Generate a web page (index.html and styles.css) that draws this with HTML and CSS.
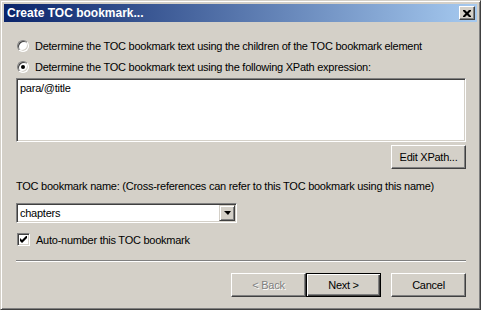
FILE: index.html
```html
<!DOCTYPE html>
<html lang="en">
<head>
    <meta charset="UTF-8">
    <title>Create TOC bookmark...</title>
    <link rel="stylesheet" href="styles.css">
</head>
<body>
    <div class="window">
        <div class="titlebar">
            <span class="title">Create TOC bookmark...</span>
            <span class="close">
                <svg width="8" height="7" viewBox="0 0 8 7">
                    <path d="M0 0h2l2 2 2-2h2v1l-2.5 2.5 2.5 2.5v1h-2l-2-2-2 2h-2v-1l2.5-2.5-2.5-2.5z" fill="#000"/>
                </svg>
            </span>
        </div>

        <div class="content">
            <label class="option">
                <span class="radio"></span>
                Determine the TOC bookmark text using the children of the TOC bookmark element
            </label>
            <label class="option">
                <span class="radio checked"></span>
                Determine the TOC bookmark text using the following XPath expression:
            </label>

            <div class="textbox">para/@title</div>

            <div class="row-right">
                <button class="btn">Edit XPath...</button>
            </div>

            <div class="name-label">TOC bookmark name: (Cross-references can refer to this TOC bookmark using this name)</div>

            <div class="combo">
                <span class="combo-text">chapters</span>
                <span class="combo-arrow"><span class="triangle"></span></span>
            </div>

            <label class="check-row">
                <span class="checkbox">
                    <svg width="7" height="7" viewBox="0 0 7 7">
                        <path d="M0 2v3l2 2 5-5v-3l-5 5z" fill="#000"/>
                    </svg>
                </span>
                Auto-number this TOC bookmark
            </label>

            <div class="separator"></div>

            <div class="buttons">
                <button class="btn disabled">&lt; Back</button>
                <button class="btn default">Next &gt;</button>
                <button class="btn cancel">Cancel</button>
            </div>
        </div>
    </div>
</body>
</html>
```

FILE: styles.css
```css
* {
    box-sizing: border-box;
}

body {
    margin: 0;
    background: #d4d0c8;
    font-family: "Liberation Sans", Arial, sans-serif;
    font-size: 11px;
    letter-spacing: -0.25px;
    color: #000;
}

.window {
    width: 481px;
    height: 310px;
    background: #d4d0c8;
    border-top: 1px solid #d4d0c8;
    border-left: 1px solid #d4d0c8;
    border-right: 1px solid #404040;
    border-bottom: 1px solid #404040;
    box-shadow: inset 1px 1px 0 #fff, inset -1px -1px 0 #808080;
    padding: 3px;
}

.titlebar {
    height: 18px;
    background: linear-gradient(to right, #0a246a, #a6caf0);
    display: flex;
    align-items: center;
    justify-content: space-between;
    padding: 0 2px 0 3px;
}

.title {
    color: #fff;
    font-weight: bold;
    font-size: 12px;
    letter-spacing: 0;
}

.close {
    width: 16px;
    height: 14px;
    background: #d4d0c8;
    border-top: 1px solid #fff;
    border-left: 1px solid #fff;
    border-right: 1px solid #404040;
    border-bottom: 1px solid #404040;
    box-shadow: inset -1px -1px 0 #808080;
    display: flex;
    align-items: center;
    justify-content: center;
    padding-right: 1px;
}

.content {
    padding: 13px 11px 0 12px;
}

.option {
    display: flex;
    align-items: center;
    height: 21px;
    gap: 6px;
    padding-left: 1px;
}

.radio {
    width: 12px;
    height: 12px;
    border-radius: 50%;
    background: #fff;
    border: 1px solid;
    border-color: #808080 #fff #fff #808080;
    box-shadow: inset 1px 1px 0 #404040, inset -1px -1px 0 #d4d0c8;
    position: relative;
    flex: none;
}

.radio.checked::after {
    content: "";
    position: absolute;
    left: 3px;
    top: 3px;
    width: 4px;
    height: 4px;
    border-radius: 50%;
    background: #000;
}

.textbox {
    margin-top: 1px;
    height: 64px;
    background: #fff;
    border: 1px solid;
    border-color: #808080 #fff #fff #808080;
    box-shadow: inset 1px 1px 0 #404040, inset -1px -1px 0 #d4d0c8;
    padding: 3px 3px;
}

.row-right {
    display: flex;
    justify-content: flex-end;
    margin-top: 3px;
}

.btn {
    width: 75px;
    height: 24px;
    font-family: inherit;
    font-size: 11px;
    letter-spacing: -0.25px;
    color: #000;
    background: #d4d0c8;
    border-top: 1px solid #fff;
    border-left: 1px solid #fff;
    border-right: 1px solid #404040;
    border-bottom: 1px solid #404040;
    box-shadow: inset -1px -1px 0 #808080;
    padding: 0;
}

.btn.disabled {
    color: #808080;
    text-shadow: 1px 1px 0 #fff;
}

.btn.default {
    border: 1px solid #000;
    box-shadow: inset 1px 1px 0 #fff, inset -1px -1px 0 #404040, inset -2px -2px 0 #808080;
}

.name-label {
    margin-top: 11px;
    height: 13px;
    line-height: 13px;
}

.combo {
    margin-top: 10px;
    width: 221px;
    height: 20px;
    background: #fff;
    border: 1px solid;
    border-color: #808080 #fff #fff #808080;
    box-shadow: inset 1px 1px 0 #404040, inset -1px -1px 0 #d4d0c8;
    display: flex;
    align-items: center;
    justify-content: space-between;
    padding: 1px 1px 1px 3px;
}

.combo-arrow {
    width: 16px;
    height: 16px;
    background: #d4d0c8;
    border-top: 1px solid #d4d0c8;
    border-left: 1px solid #d4d0c8;
    border-right: 1px solid #404040;
    border-bottom: 1px solid #404040;
    box-shadow: inset 1px 1px 0 #fff, inset -1px -1px 0 #808080;
    display: flex;
    align-items: center;
    justify-content: center;
}

.triangle {
    width: 0;
    height: 0;
    border-left: 4px solid transparent;
    border-right: 3px solid transparent;
    border-top: 4px solid #000;
}

.check-row {
    display: flex;
    align-items: center;
    height: 13px;
    gap: 6px;
    margin-top: 10px;
    padding-left: 1px;
}

.checkbox {
    width: 13px;
    height: 13px;
    background: #fff;
    border: 1px solid;
    border-color: #808080 #fff #fff #808080;
    box-shadow: inset 1px 1px 0 #404040, inset -1px -1px 0 #d4d0c8;
    display: flex;
    align-items: center;
    justify-content: center;
    flex: none;
}

.separator {
    margin-top: 14px;
    height: 2px;
    border-top: 1px solid #808080;
    border-bottom: 1px solid #fff;
}

.buttons {
    display: flex;
    justify-content: flex-end;
    margin-top: 11px;
}

.btn.cancel {
    margin-left: 10px;
}
```
